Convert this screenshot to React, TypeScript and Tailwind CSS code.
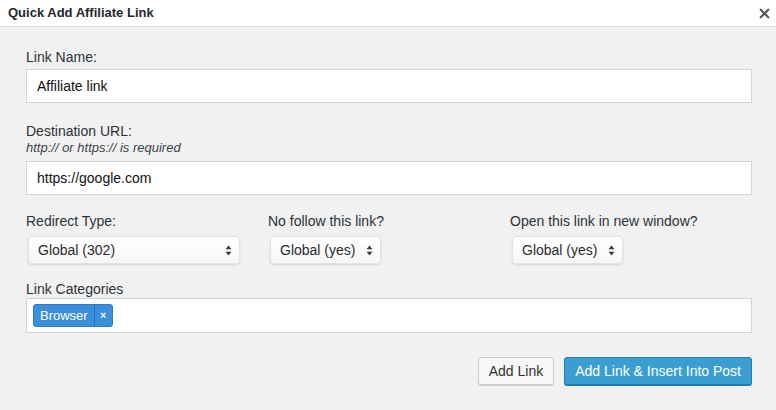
import { X } from "lucide-react";

function SelectBox({ value, width }: { value: string; width: string }) {
  return (
    <div
      className={`${width} h-[28px] flex items-center justify-between pl-[9px] pr-[7px] rounded-[4px] border border-[#e2e2e2] bg-gradient-to-b from-white to-[#f6f6f6] shadow-[0_1px_2px_rgba(0,0,0,0.12)] text-[14px] text-[#2c2c2c]`}
    >
      <span>{value}</span>
      <svg width="7" height="11" viewBox="0 0 7 11" className="text-[#3a3a3a]">
        <path d="M3.5 0.5 L6.5 4.3 H0.5 Z" fill="currentColor" />
        <path d="M3.5 10.5 L6.5 6.7 H0.5 Z" fill="currentColor" />
      </svg>
    </div>
  );
}

export default function App() {
  return (
    <div className="w-[776px] h-[410px] bg-[#f1f1f1] font-['Helvetica','Liberation_Sans',Arial,sans-serif] text-[#23282d] overflow-hidden">
      {/* Header */}
      <div className="h-[27px] bg-white border-b border-[#dddddd] flex items-center justify-between pl-[8px] pr-[4px]">
        <h1 className="text-[13px] font-bold text-[#23282d]">Quick Add Affiliate Link</h1>
        <X size={15} strokeWidth={3.5} className="text-[#555555]" />
      </div>

      <div className="pl-[26px] pr-[24px] pt-[21px]">
        {/* Link Name */}
        <label className="block text-[14px] text-[#2c3338] leading-[18px]">Link Name:</label>
        <div className="mt-[3px] h-[34px] w-[726px] bg-white border border-[#d4d4d4] flex items-center px-[10px] text-[14px] text-[#111]">
          Affiliate link
        </div>

        {/* Destination URL */}
        <label className="block mt-[19px] text-[14px] text-[#2c3338] leading-[18px]">Destination URL:</label>
        <p className="text-[13px] italic text-[#3c434a] leading-[15px]">http:// or https:// is required</p>
        <div className="mt-[6px] h-[34px] w-[726px] bg-white border border-[#d4d4d4] flex items-center px-[10px] text-[14px] text-[#111]">
          https://google.com
        </div>

        {/* Selects */}
        <div className="mt-[17px] flex">
          <div className="w-[242px]">
            <label className="block text-[14px] text-[#2c3338] leading-[18px]">Redirect Type:</label>
            <div className="mt-[6px] pl-[2px]">
              <SelectBox value="Global (302)" width="w-[212px]" />
            </div>
          </div>
          <div className="w-[242px]">
            <label className="block text-[14px] text-[#2c3338] leading-[18px]">No follow this link?</label>
            <div className="mt-[6px] pl-[2px]">
              <SelectBox value="Global (yes)" width="w-[111px]" />
            </div>
          </div>
          <div className="w-[242px]">
            <label className="block text-[14px] text-[#2c3338] leading-[18px]">Open this link in new window?</label>
            <div className="mt-[6px] pl-[2px]">
              <SelectBox value="Global (yes)" width="w-[111px]" />
            </div>
          </div>
        </div>

        {/* Link Categories */}
        <label className="block mt-[16px] text-[14px] text-[#2c3338] leading-[18px]">Link Categories</label>
        <div className="h-[35px] w-[726px] bg-white border border-[#d4d4d4] flex items-center pl-[6px]">
          <div className="flex h-[23px] rounded-[3px] bg-[#3a8fdc] border border-[#2f7cc4] text-white overflow-hidden">
            <span className="px-[6px] flex items-center text-[13px]">Browser</span>
            <span className="w-[18px] flex items-center justify-center border-l border-[#2a6fb0] text-[10px] font-bold">×</span>
          </div>
        </div>

        {/* Buttons */}
        <div className="mt-[24px] flex justify-end gap-[10px]">
          <button className="h-[28px] px-[10px] rounded-[3px] border border-[#cccccc] bg-[#f7f7f7] text-[14px] text-[#333] shadow-[0_1px_0_#cccccc]">
            Add Link
          </button>
          <button className="h-[28px] px-[10px] rounded-[3px] border border-[#1f82b5] bg-[#3a9fd0] text-[14px] text-white shadow-[0_1px_0_#1e78a8]">
            Add Link &amp; Insert Into Post
          </button>
        </div>
      </div>
    </div>
  );
}
